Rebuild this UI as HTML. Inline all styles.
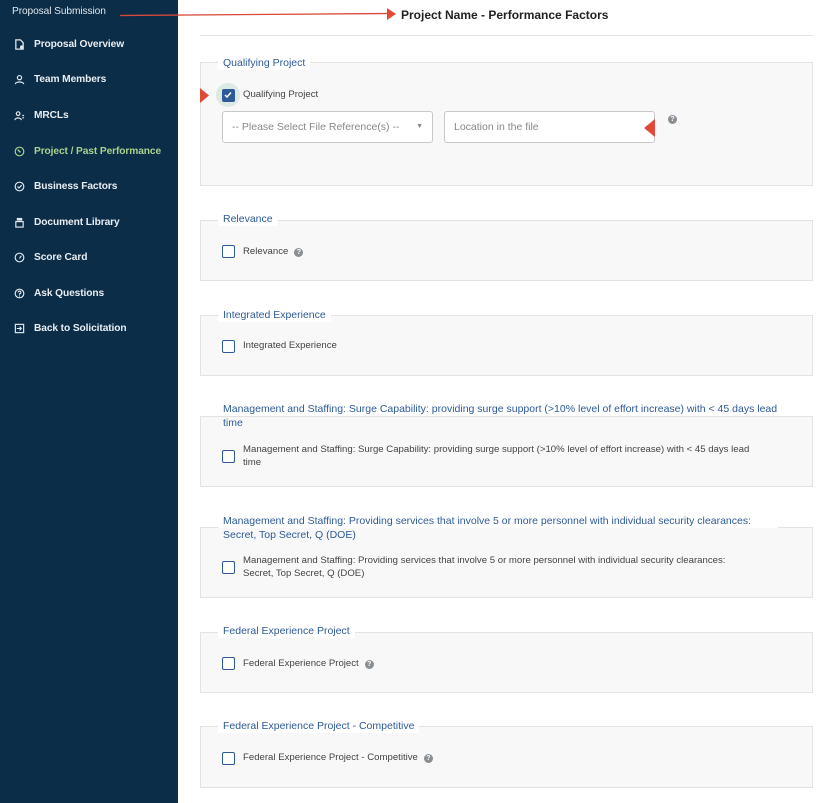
<!DOCTYPE html>
<html><head><meta charset="utf-8"><style>
*{margin:0;padding:0;box-sizing:border-box}
body{width:832px;height:803px;overflow:hidden;background:#fff;font-family:"Liberation Sans",sans-serif;position:relative}
#sb{position:absolute;left:0;top:0;width:178px;height:803px;background:#0b2d47}
.it{position:absolute;left:14px;font-size:10.2px;color:#e8edf2;font-weight:bold;letter-spacing:-0.1px;display:flex;align-items:center}
.it svg{width:11px;height:11px;margin-right:9px}
.box{position:absolute;left:200px;width:613px;background:#f8f8f8;border:1px solid #e2e2e2}
.lg{position:absolute;left:218px;background:#fff;padding:0 5px;font-size:10.5px;color:#2e5a97;line-height:14px}
.cb{position:absolute;left:222px;width:13px;height:13px;border:1.5px solid #2e5a97;border-radius:2px;background:#fff}
.lb{position:absolute;left:243px;font-size:9.6px;color:#444;line-height:13px;white-space:nowrap}
.q{display:inline-block;width:9px;height:9px;border-radius:50%;background:#8a8f94;color:#fff;font-size:7px;text-align:center;line-height:9px;font-weight:bold;margin-left:6px;vertical-align:0px}
.inp{position:absolute;top:111px;height:32px;background:#fff;border:1px solid #c8c8c8;border-radius:3px;font-size:10.5px;color:#888;padding:9px 9px}
</style></head><body>
<div id="sb">
<div class="it" style="top:6px;font-weight:normal;color:#dfe6ec;left:12px">Proposal Submission</div>
<div class="it" style="top:39px"><svg viewBox="0 0 12 12"><path d="M2 1h5l3 3v7H2z" fill="none" stroke="#dfe6ec" stroke-width="1.4"/><circle cx="8.5" cy="9" r="2" fill="#dfe6ec"/></svg>Proposal Overview</div>
<div class="it" style="top:74px"><svg viewBox="0 0 12 12"><circle cx="6" cy="4" r="2.3" fill="none" stroke="#dfe6ec" stroke-width="1.3"/><path d="M1.5 11c0-3 9-3 9 0" fill="none" stroke="#dfe6ec" stroke-width="1.3"/></svg>Team Members</div>
<div class="it" style="top:110px"><svg viewBox="0 0 12 12"><circle cx="4.5" cy="4" r="2" fill="none" stroke="#dfe6ec" stroke-width="1.3"/><path d="M1 11c0-3 7-3 7 0M9 6h2M9 8.5h2" fill="none" stroke="#dfe6ec" stroke-width="1.3"/></svg>MRCLs</div>
<div class="it" style="top:146px;color:#a9d18e"><svg viewBox="0 0 12 12"><circle cx="6" cy="6" r="4.7" fill="none" stroke="#a9d18e" stroke-width="1.3"/><path d="M4 4l3 3" stroke="#a9d18e" stroke-width="1.5"/></svg>Project / Past Performance</div>
<div class="it" style="top:181px"><svg viewBox="0 0 12 12"><circle cx="6" cy="6" r="4.7" fill="none" stroke="#dfe6ec" stroke-width="1.3"/><path d="M3.8 6l1.6 1.6 3-3" fill="none" stroke="#dfe6ec" stroke-width="1.3"/></svg>Business Factors</div>
<div class="it" style="top:217px"><svg viewBox="0 0 12 12"><rect x="2" y="5" width="8" height="6" fill="none" stroke="#dfe6ec" stroke-width="1.3"/><rect x="3" y="1" width="6" height="3" fill="#dfe6ec"/></svg>Document Library</div>
<div class="it" style="top:252px"><svg viewBox="0 0 12 12"><circle cx="6" cy="6" r="4.7" fill="none" stroke="#dfe6ec" stroke-width="1.3"/><path d="M6 7l2-3" stroke="#dfe6ec" stroke-width="1.3"/></svg>Score Card</div>
<div class="it" style="top:288px"><svg viewBox="0 0 12 12"><circle cx="6" cy="6" r="4.7" fill="none" stroke="#dfe6ec" stroke-width="1.3"/><path d="M4.5 4.8a1.5 1.5 0 1 1 1.5 1.5v1" fill="none" stroke="#dfe6ec" stroke-width="1.2"/><circle cx="6" cy="8.7" r=".7" fill="#dfe6ec"/></svg>Ask Questions</div>
<div class="it" style="top:323px"><svg viewBox="0 0 12 12"><rect x="1.5" y="1.5" width="9" height="9" fill="none" stroke="#dfe6ec" stroke-width="1.3"/><path d="M3 6h5M6 4l2 2-2 2" fill="none" stroke="#dfe6ec" stroke-width="1.2"/></svg>Back to Solicitation</div>
</div>
<svg style="position:absolute;left:0;top:0" width="832" height="40"><path d="M120 15.5L390 13.5" stroke="#d9493a" stroke-width="1.3"/><path d="M387 8L396 14L387 20z" fill="#e04a36"/></svg>
<div style="position:absolute;left:401px;top:8px;font-size:12px;font-weight:bold;color:#222">Project Name - Performance Factors</div>
<div style="position:absolute;left:200px;top:35px;width:613px;height:1px;background:#e4e4e4"></div>

<div class="box" style="top:62px;height:124px"></div>
<div class="lg" style="top:56px">Qualifying Project</div>
<div style="position:absolute;left:216px;top:83px;width:24px;height:24px;border-radius:50%;background:#dde9e4"></div>
<div class="cb" style="top:89px;background:#2e5a97"><svg width="10" height="10" viewBox="0 0 10 10" style="position:absolute;left:0;top:0"><path d="M2 5l2 2 4-4.5" fill="none" stroke="#fff" stroke-width="1.5"/></svg></div>
<svg style="position:absolute;left:200px;top:88px" width="10" height="16"><path d="M0 0L9 7.5L0 15z" fill="#e04a36"/></svg>
<div class="lb" style="top:88px">Qualifying Project</div>
<div class="inp" style="left:222px;width:211px">-- Please Select File Reference(s) --<span style="position:absolute;right:9px;top:11px;font-size:7px">▼</span></div>
<div class="inp" style="left:444px;width:211px">Location in the file</div>
<svg style="position:absolute;left:644px;top:119px" width="12" height="18"><path d="M0 9L11 0V18z" fill="#e04a36"/></svg>
<div class="q" style="position:absolute;left:662px;top:115px">?</div>

<div class="box" style="top:220px;height:61px"></div>
<div class="lg" style="top:212px">Relevance</div>
<div class="cb" style="top:245px"></div><div class="lb" style="top:245px">Relevance<span class="q">?</span></div>

<div class="box" style="top:315px;height:61px"></div>
<div class="lg" style="top:308px">Integrated Experience</div>
<div class="cb" style="top:340px"></div><div class="lb" style="top:339px">Integrated Experience</div>

<div class="box" style="top:416px;height:71px"></div>
<div class="lg" style="top:402px;width:575px;padding-left:5px;background:linear-gradient(#fff 50%,transparent 50%)">Management and Staffing: Surge Capability: providing surge support (>10% level of effort increase) with &lt; 45 days lead time</div>
<div class="cb" style="top:450px"></div><div class="lb" style="top:443px">Management and Staffing: Surge Capability: providing surge support (>10% level of effort increase) with &lt; 45 days lead<br>time</div>

<div class="box" style="top:527px;height:71px"></div>
<div class="lg" style="top:514px;width:560px;background:linear-gradient(#fff 50%,transparent 50%)">Management and Staffing: Providing services that involve 5 or more personnel with individual security clearances: Secret, Top Secret, Q (DOE)</div>
<div class="cb" style="top:561px"></div><div class="lb" style="top:554px">Management and Staffing: Providing services that involve 5 or more personnel with individual security clearances:<br>Secret, Top Secret, Q (DOE)</div>

<div class="box" style="top:632px;height:61px"></div>
<div class="lg" style="top:624px">Federal Experience Project</div>
<div class="cb" style="top:657px"></div><div class="lb" style="top:657px">Federal Experience Project<span class="q">?</span></div>

<div class="box" style="top:726px;height:62px"></div>
<div class="lg" style="top:719px">Federal Experience Project - Competitive</div>
<div class="cb" style="top:752px"></div><div class="lb" style="top:751px">Federal Experience Project - Competitive<span class="q">?</span></div>
</body></html>
